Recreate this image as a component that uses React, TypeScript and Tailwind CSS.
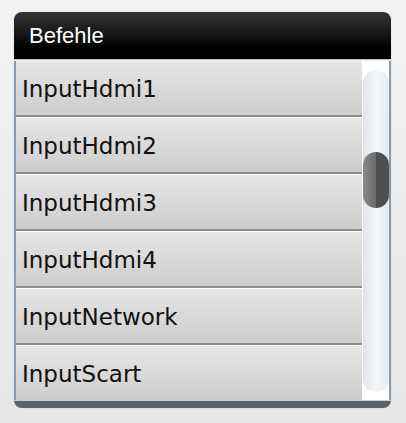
import React from "react";

const rows = ["InputHdmi1", "InputHdmi2", "InputHdmi3", "InputHdmi4", "InputNetwork", "InputScart"];

export default function App() {
  return (
    <div className="w-[406px] h-[423px] bg-gradient-to-b from-[#f3f3f3] to-[#e6e6e6] pt-[12px] pl-[14px]">
      <div className="w-[377px] rounded-[8px] overflow-hidden shadow-[0_0_1px_rgba(0,0,0,0.3)]">
        <div className="h-[47px] bg-gradient-to-b from-[#343434] via-[#151515] to-[#000000] flex items-center pl-[15px] text-white text-[22px] [font-family:'Liberation_Sans',Arial,sans-serif]">
          Befehle
        </div>
        <div className="h-[1px] bg-[#b8c2cc]" />
        <div className="h-[1px] bg-[#eef1f4]" />
        <div className="flex h-[339px] border-l-2 border-r-2 border-[#8d9cab] bg-white">
          <div className="w-[346px] overflow-hidden">
            {rows.map((r) => (
              <div key={r}>
                <div className="h-[54px] bg-gradient-to-b from-[#e6e6e6] to-[#cdcdcd] flex items-center pl-[6px] pt-[2px] text-[23px] text-[#111] [font-family:'DejaVu_Sans',Verdana,sans-serif]">
                  {r}
                </div>
                <div className="h-[2px] bg-[#8c8c8c]" />
                <div className="h-[1px] bg-white" />
              </div>
            ))}
          </div>
          <div className="flex-1 pt-[9px] pb-[8px] pl-[1px]">
            <div className="relative h-full rounded-full bg-gradient-to-r from-[#dfe5ea] via-[#f4f7f9] to-[#e6ebef]">
              <div className="absolute left-0 right-0 top-[82px] h-[56px] rounded-full overflow-hidden flex">
                <div className="w-1/2 bg-gradient-to-r from-[#8a8a8a] to-[#6a6a6a]" />
                <div className="w-1/2 bg-[#4f4f4f]" />
              </div>
            </div>
          </div>
        </div>
        <div className="h-[8px] bg-[#5d6166] border-t border-[#c8d0d8]" />
      </div>
    </div>
  );
}
